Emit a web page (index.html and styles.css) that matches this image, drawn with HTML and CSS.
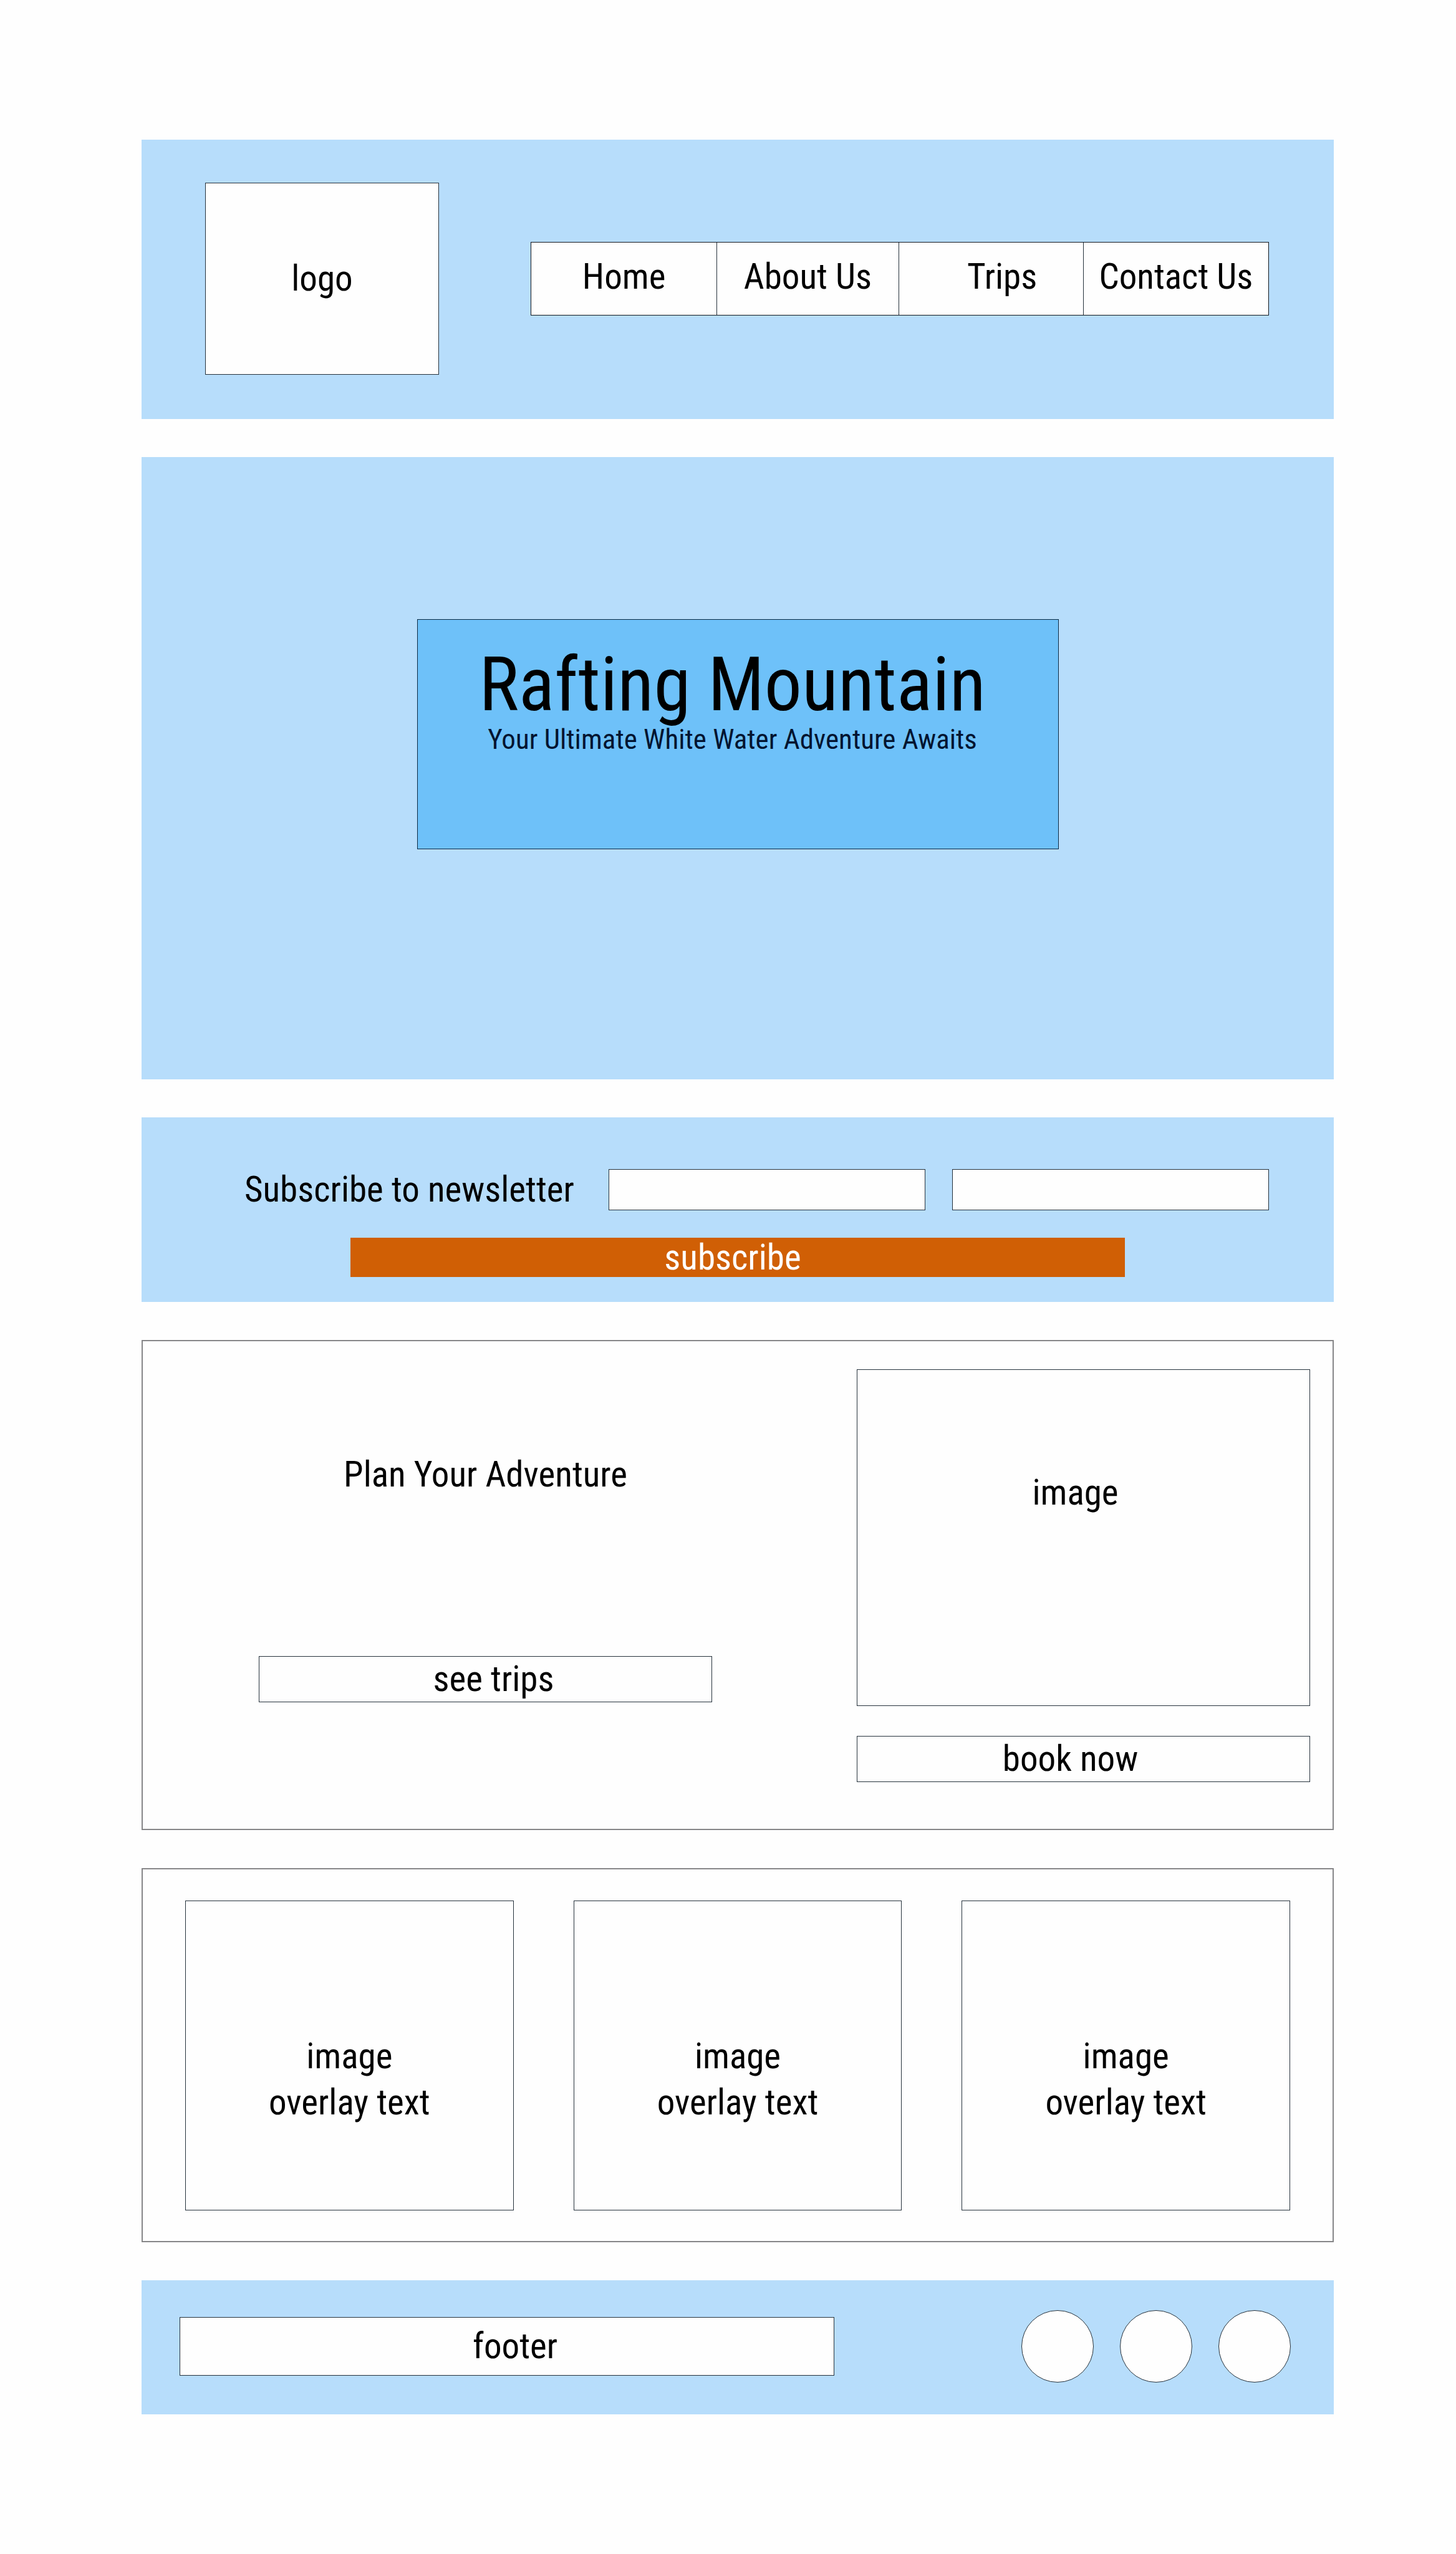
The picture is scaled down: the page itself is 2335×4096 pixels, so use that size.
FILE: index.html
```html
<!DOCTYPE html>
<html lang="en">
<head>
  <meta charset="utf-8">
  <meta name="viewport" content="width=device-width, initial-scale=1">
  <title>Rafting Mountain</title>
  <link rel="stylesheet" href="styles.css">
</head>
<body>
  <div class="page">
    <header class="band header">
      <a class="box logo" href="#">logo</a>
      <nav class="nav" aria-label="Main">
        <a class="nav-link" href="#">Home</a>
        <a class="nav-link" href="#">About Us</a>
        <a class="nav-link nav-link-trips" href="#">Trips</a>
        <a class="nav-link" href="#">Contact Us</a>
      </nav>
    </header>

    <section class="band hero">
      <div class="hero-box">
        <h1 class="hero-title">Rafting Mountain</h1>
        <p class="hero-tagline">Your Ultimate White Water Adventure Awaits</p>
      </div>
    </section>

    <form class="band newsletter">
      <div class="newsletter-row">
        <label class="newsletter-label" for="subscriber-name">Subscribe to newsletter</label>
        <input class="box field" id="subscriber-name" type="text">
        <input class="box field" type="email" aria-label="Email">
      </div>
      <button class="subscribe" type="submit">subscribe</button>
    </form>

    <section class="panel plan">
      <div class="plan-intro">
        <h2 class="plan-title">Plan Your Adventure</h2>
        <button class="box action action-trips" type="button">see trips</button>
      </div>
      <div class="plan-media">
        <div class="box plan-image">image</div>
        <button class="box action action-book" type="button">book now</button>
      </div>
    </section>

    <section class="panel gallery">
      <div class="box card"><p>image<br>overlay text</p></div>
      <div class="box card"><p>image<br>overlay text</p></div>
      <div class="box card"><p>image<br>overlay text</p></div>
    </section>

    <footer class="band footer">
      <div class="box footer-text">footer</div>
      <div class="social">
        <a class="social-link" href="#" aria-label="Social link one"></a>
        <a class="social-link" href="#" aria-label="Social link two"></a>
        <a class="social-link" href="#" aria-label="Social link three"></a>
      </div>
    </footer>
  </div>
</body>
</html>
```
FILE: styles.css
```css
* {
  box-sizing: border-box;
}

body {
  margin: 0;
  background: #fefefe;
  color: #000;
  font-family: "Roboto Condensed", "Arial Narrow", "Liberation Sans", Arial, sans-serif;
  font-size: 57px;
  line-height: 74px;
}

h1, h2, p {
  margin: 0;
  font-weight: normal;
}

a {
  color: inherit;
  text-decoration: none;
}

button, input {
  margin: 0;
  padding: 0;
  border-radius: 0;
  font: inherit;
  color: inherit;
}

.page {
  display: flex;
  flex-direction: column;
  gap: 61px;
  padding: 224px 196px 225px 227px;
}

.band {
  background: #b7ddfb;
}

.panel {
  border: 2px solid #868688;
}

.box {
  border: 1px solid #26323c;
  background: #fefefe;
}

/* Header */
.header {
  display: flex;
  align-items: center;
  gap: 147px;
  padding: 69px 104px 71px 102px;
}

.logo {
  display: flex;
  flex: 0 0 375px;
  align-items: center;
  justify-content: center;
  height: 308px;
}

.nav {
  display: grid;
  flex: 1;
  grid-template-columns: minmax(0, 298fr) minmax(0, 292fr) minmax(0, 297fr) minmax(0, 298fr);
  border: 1px solid #10161c;
  background: #fefefe;
}

.nav-link {
  padding: 18px 0 24px;
  text-align: center;
  white-space: nowrap;
}

.nav-link + .nav-link {
  border-left: 1px solid #26323c;
}

.nav-link-trips {
  padding-left: 36px;
}

/* Hero */
.hero {
  padding: 260px 441px 369px 442px;
}

.hero-box {
  height: 369px;
  padding: 44px 18px 0 0;
  border: 1px solid #0c2a44;
  background: #6ec1f9;
  text-align: center;
}

.hero-title {
  font-size: 120px;
  line-height: 120px;
}

.hero-tagline {
  color: #021430;
  font-size: 45px;
  line-height: 56px;
}

/* Newsletter */
.newsletter {
  display: flex;
  flex-direction: column;
  align-items: center;
  gap: 40px;
  padding: 79px 0 40px;
}

.newsletter-row {
  display: flex;
  align-items: center;
  gap: 43px;
  width: 100%;
  padding: 0 104px 0 165px;
}

.newsletter-label {
  flex: none;
  width: 541px;
  white-space: nowrap;
}

.field {
  flex: 1;
  min-width: 0;
  height: 66px;
}

.subscribe {
  width: 65%;
  height: 63px;
  padding-right: 16px;
  border: 0;
  background: #d05f05;
  color: #fff;
  line-height: 63px;
}

/* Plan */
.plan {
  display: flex;
  gap: 232px;
  padding: 45px 36px 75px 186px;
}

.plan-intro,
.plan-media {
  display: flex;
  flex: 1;
  flex-direction: column;
  text-align: center;
}

.plan-intro {
  padding-top: 132px;
}

.plan-title {
  font-size: inherit;
}

.plan-image {
  height: 540px;
  margin-bottom: 48px;
  padding: 160px 26px 0 0;
}

.action {
  height: 74px;
  line-height: 72px;
}

.action-trips {
  margin-top: 254px;
  padding-left: 26px;
}

.action-book {
  padding-right: 42px;
}

/* Gallery */
.gallery {
  display: grid;
  grid-template-columns: repeat(3, 1fr);
  gap: 96px;
  padding: 50px 68px 49px;
}

.card {
  padding: 212px 0 135px;
  text-align: center;
}

/* Footer */
.footer {
  display: flex;
  align-items: center;
  gap: 300px;
  padding: 48px 69px 51px 61px;
}

.footer-text {
  flex: 1;
  padding: 9px 0 9px 26px;
  text-align: center;
}

.social {
  display: flex;
  gap: 42px;
}

.social-link {
  width: 116px;
  height: 116px;
  border: 1px solid #26323c;
  border-radius: 50%;
  background: #fefefe;
}
```
